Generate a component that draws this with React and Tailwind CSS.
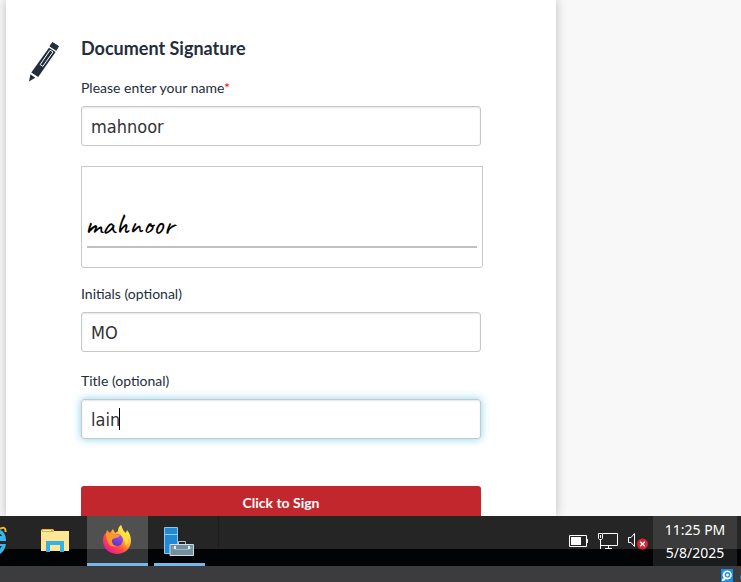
import { useState } from "react";

const inputBase =
  "block h-10 w-full rounded-[3px] border border-[#c8c8c8] bg-white px-[9px] font-['DejaVu_Sans_Condensed','Noto_Sans',sans-serif] text-lg text-[#333] shadow-[inset_0_1px_2px_rgba(0,0,0,0.1)] outline-none";
const labelBase = "block text-sm leading-5 text-[#242e3b]";

function PenIcon() {
  return (
    <svg width="30" height="40" viewBox="0 0 30 40" aria-hidden="true">
      <path d="M23.5 0.5L29.5 4.3L27.2 8.3L20.9 4.2Z" fill="#242e3b" stroke="#242e3b" strokeLinejoin="round" />
      <path d="M20 5.8L26.6 10.1L9.2 35L2.3 30.5Z" fill="#242e3b" />
      <path d="M21 8.2L24 10L13.8 24.4L11.2 22.6Z" fill="#242e3b" stroke="#fff" strokeWidth="1" />
      <path d="M1.4 32.2L6.3 35.8L0 39.6Z" fill="#242e3b" />
    </svg>
  );
}

function ExplorerBrowserIcon() {
  return (
    <svg width="7" height="30" viewBox="0 0 7 30" aria-hidden="true">
      <path d="M0 4C4 5 6 10 6 15H0V10H2Q1 8 0 8ZM0 18H6C5 23 3 26 0 28V23L2 20H0Z" fill="#36b8ee" />
      <path d="M0 3C3 1 6 1 5.5 6" fill="none" stroke="#efb62f" strokeWidth="2" />
    </svg>
  );
}

function FolderIcon() {
  return (
    <svg width="28" height="24" viewBox="0 0 28 24" aria-hidden="true">
      <path d="M0 2Q0 0 2 0H11Q13 0 13 2H28V22H0Z" fill="#ffe596" />
      <path d="M1 0H11L13 3H1Z" fill="#efb11e" />
      <path d="M2 1H10V2H2Z" fill="#fff3cf" />
      <path d="M5 12H23V23H19V16H9V23H5Z" fill="#35b1e5" />
    </svg>
  );
}

function FirefoxIcon() {
  return (
    <svg width="28" height="30" viewBox="0 0 28 30" aria-hidden="true">
      <defs>
        <linearGradient id="fox" x1="0.85" y1="0.1" x2="0.2" y2="0.9">
          <stop offset="0.1" stopColor="#fff04a" />
          <stop offset="0.4" stopColor="#ffb32c" />
          <stop offset="0.65" stopColor="#ff523d" />
          <stop offset="1" stopColor="#f5178e" />
        </linearGradient>
        <linearGradient id="globe" x1="0.7" y1="0" x2="0.3" y2="1">
          <stop offset="0" stopColor="#a154f6" />
          <stop offset="1" stopColor="#5933bb" />
        </linearGradient>
      </defs>
      <path d="M4 5L7 8L10 4L12 8Q14 7 15 6Q15 2 18 0Q19 5 23 8L24 5Q28 10 28 16Q27 28 14 29Q1 28 0 16Q0 10 3 8Z" fill="url(#fox)" />
      <circle cx="14" cy="15" r="6" fill="url(#globe)" />
      <path d="M3 8Q7 7 10 9L17 10Q16 13 12 13Q8 14 9 17Q10 21 14 21Q8 23 5 18Q3 14 3 8Z" fill="#ff952d" />
      <path d="M18 0Q19 5 23 9Q27 15 23 21Q22 14 18 10Q14 7 18 0Z" fill="#ffdf41" />
    </svg>
  );
}

function ServerIcon() {
  return (
    <svg width="30" height="29" viewBox="0 0 30 29" aria-hidden="true">
      <path d="M0.5 0.5H13.5V26.5H0.5Z" fill="#218ad6" stroke="#8fc4ec" />
      <path d="M1 7.5H13" stroke="#8ed0f6" />
      <path d="M14.5 18V14.5H21.5V18" fill="none" stroke="#b5c5cf" />
      <path d="M6 17.5H29.5V28.5H6Z" fill="#718f9f" stroke="#d1dce2" />
      <path d="M8 20.5L12 22.5H24L28 20.5" fill="none" stroke="#a3b5bf" />
      <path d="M11 19V22M25 19V22" stroke="#e9eef1" strokeWidth="2" />
    </svg>
  );
}

function BatteryIcon() {
  return (
    <svg width="19" height="12" viewBox="0 0 19 12" aria-hidden="true">
      <path d="M0.5 0.5H17.5V11.5H0.5Z" fill="none" stroke="#fff" />
      <path d="M2 2H12V10H2ZM18 4H19V8H18Z" fill="#fff" />
    </svg>
  );
}

function NetworkIcon() {
  return (
    <svg width="20" height="17" viewBox="0 0 20 17" fill="none" stroke="#fff" aria-hidden="true">
      <path d="M5 0.5H19.5V12.5H2.5V16M2.5 7V13M10.5 12.5V15.5M7 15.5H14M0.5 0.5H4.5V5.5L3.5 6.5H1.5L0.5 5.5ZM2.5 2V5" />
    </svg>
  );
}

function MutedIcon() {
  return (
    <svg width="20" height="18" viewBox="0 0 20 18" fill="none" aria-hidden="true">
      <path d="M0.5 5.5H3L6.5 1.5V14.5L3 10.5H0.5Z" stroke="#fff" />
      <circle cx="14.5" cy="12" r="5.5" fill="#dc2430" />
      <path d="M12.2 9.7L16.8 14.3M16.8 9.7L12.2 14.3" stroke="#fff" strokeWidth="1.4" />
    </svg>
  );
}

function DiskIcon() {
  return (
    <svg width="20" height="13" viewBox="0 0 20 13" aria-hidden="true">
      <path d="M0 0H12V13H0Z" fill="#188ceb" />
      <circle cx="6.2" cy="6" r="4.6" fill="#fff" />
      <circle cx="6.5" cy="5.8" r="2.8" fill="#188ceb" />
      <circle cx="6.5" cy="6" r="1.4" fill="#fff" />
      <path d="M6 8L3 12H1V10Z" fill="#fff" />
      <circle cx="24" cy="8" r="5" fill="#1680df" />
    </svg>
  );
}

function Taskbar() {
  return (
    <footer className="shrink-0 font-['Noto_Sans',sans-serif]">
      <div className="flex h-[50px] bg-linear-to-b from-[#252525] from-66% to-[#020304] to-66%">
        <button aria-label="Internet Explorer" className="flex w-[26px] items-center"><ExplorerBrowserIcon /></button>
        <button aria-label="File Explorer" className="flex w-[61px] items-center pl-[15px]"><FolderIcon /></button>
        <button aria-label="Firefox" className="flex w-[61px] items-center justify-center border-b-[3px] border-[#78b7ec] bg-linear-to-b from-[#505050] from-70% to-[#343536] to-70% pr-[2px]"><FirefoxIcon /></button>
        <button aria-label="Server Manager" className="ml-[6px] flex w-[51px] items-center justify-center border-b-[3px] border-[#78b7ec] pt-[3px] pr-[2px]"><ServerIcon /></button>
        <div className="ml-[13px] w-px bg-black/20" />
        <div className="ml-auto flex items-center gap-[10px] pr-[5px]">
          <button aria-label="Battery"><BatteryIcon /></button>
          <button aria-label="Network"><NetworkIcon /></button>
          <button aria-label="Volume muted"><MutedIcon /></button>
        </div>
        <button className="mr-1 w-[84px] bg-linear-to-b from-[#3b3b3b] from-66% to-[#1b1c1e] to-66% text-center text-sm leading-[23px] text-white">
          <time className="block">11:25 PM</time>
          <time className="block">5/8/2025</time>
        </button>
      </div>
      <div className="flex h-4 items-end justify-end bg-[#3c3c3e]"><DiskIcon /></div>
    </footer>
  );
}

export default function App() {
  const [name, setName] = useState("mahnoor");
  const [initials, setInitials] = useState("MO");
  const [title, setTitle] = useState("lain");

  return (
    <div className="flex h-screen flex-col overflow-hidden bg-[#f8f8f8] font-[Lato,sans-serif]">
      <main className="flex min-h-0 flex-1 overflow-hidden pl-[6px]">
        <section className="flex w-full max-w-[550px] bg-white pt-9 shadow-[0_0_10px_rgba(0,0,0,0.25)]">
          <div className="w-[75px] shrink-0 pt-[6px] pl-[23px]"><PenIcon /></div>
          <form className="min-w-0 flex-1 pr-[75px]" onSubmit={(e) => e.preventDefault()}>
            <h1 className="text-lg leading-6 font-bold text-[#242e3b]">Document Signature</h1>
            <label htmlFor="name" className={labelBase + " mt-[18px]"}>
              Please enter your name<span className="text-[#ff0020]">*</span>
            </label>
            <input id="name" value={name} onChange={(e) => setName(e.target.value)} className={inputBase + " mt-2"} />
            <div className="mt-5 -mr-[2px] flex h-[102px] flex-col rounded-b-[3px] border border-[#c8c8c8] px-[5px]">
              <output htmlFor="name" className="-ml-[2px] pt-[41px] font-['Caveat',cursive] text-3xl leading-8 text-black">{name}</output>
              <div className="mt-[6px] border-b-2 border-[#c0c0c0]" />
            </div>
            <label htmlFor="initials" className={labelBase + " mt-4"}>Initials (optional)</label>
            <input id="initials" value={initials} onChange={(e) => setInitials(e.target.value)} className={inputBase + " mt-2"} />
            <label htmlFor="title" className={labelBase + " mt-[19px]"}>Title (optional)</label>
            <div className="relative mt-2 rounded-[3px] shadow-[0_0_8px_rgba(60,185,235,0.65)]">
              <input id="title" value={title} onChange={(e) => setTitle(e.target.value)} className={inputBase} />
              <span className="absolute top-[9px] left-[38px] h-[22px] w-px bg-black" />
            </div>
            <button className="mt-[47px] block h-[34px] w-full rounded-[3px] bg-[#c1272d] text-sm font-bold text-white">Click to Sign</button>
          </form>
        </section>
      </main>
      <Taskbar />
    </div>
  );
}
